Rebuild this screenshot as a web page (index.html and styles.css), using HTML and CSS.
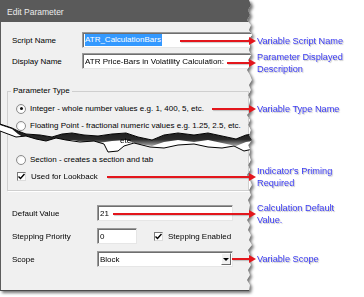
FILE: index.html
```html
<!DOCTYPE html>
<html lang="en">

<head>
  <meta charset="UTF-8">
  <meta name="viewport" content="width=device-width, initial-scale=1.0">
  <title>Edit Parameter</title>
  <link rel="stylesheet" href="styles.css">
</head>

<body>

  <div class="page">
    <div class="dialog-wrap">
      <div class="dialog">
        <div class="titlebar">Edit Parameter</div>
        <div class="body">
          <div class="row">
            <span class="label short">Script Name</span>
            <div class="field wide"><span class="sel">ATR_CalculationBars</span></div>
          </div>
          <div class="row">
            <span class="label short">Display Name</span>
            <div class="field wide">ATR Price-Bars in Volatility Calculation:</div>
          </div>

          <fieldset class="group">
            <legend>Parameter Type</legend>
            <div class="opt"><span class="radio on"></span>Integer - whole number values e.g. 1, 400, 5, etc.</div>
            <div class="opt"><span class="radio"></span>Floating Point - fractional numeric values e.g. 1.25, 2.5, etc.</div>
            <div class="opt after-tear"><span class="radio"></span>Section - creates a section and tab</div>
            <div class="opt">
              <span class="check"><svg width="7" height="7" viewBox="0 0 7 7"><polyline points="0.5,3.5 2.5,5.5 6.5,1" fill="none" stroke="#000" stroke-width="1.4"/></svg></span>Used for Lookback
            </div>
          </fieldset>

          <div class="row low">
            <span class="label">Default Value</span>
            <div class="field mid">21</div>
          </div>
          <div class="row">
            <span class="label">Stepping Priority</span>
            <div class="field small">0</div>
            <span class="check spaced"><svg width="7" height="7" viewBox="0 0 7 7"><polyline points="0.5,3.5 2.5,5.5 6.5,1" fill="none" stroke="#000" stroke-width="1.4"/></svg></span>Stepping Enabled
          </div>
          <div class="row">
            <span class="label">Scope</span>
            <div class="field mid combo">Block<span class="drop"></span></div>
          </div>
        </div>

        <!-- torn strip across the option list -->
        <svg class="tear" width="253" height="40" viewBox="0 0 253 40">
          <defs>
            <clipPath id="gap">
              <polygon points="0,6 6,8 12,10 18,13 26,16 40,17 52,19 62,16 72,15 84,17 98,18 112,16 126,15 138,19 152,22 164,17 178,15 194,17 208,15 222,18 236,21 246,17 253,16 253,31 244,33 234,28 222,30 208,29 194,26 178,27 164,30 150,29 134,25 124,28 118,33 108,34 104,26 94,23 80,24 66,22 56,20 46,23 36,21 26,18 16,19 8,16 0,13" />
            </clipPath>
            <linearGradient id="band" x1="0" y1="0" x2="0" y2="1">
              <stop offset="0" stop-color="#111" />
              <stop offset="0.7" stop-color="#2a2a2a" />
              <stop offset="1" stop-color="#aaa" />
            </linearGradient>
          </defs>
          <polygon fill="#fff" points="0,6 6,8 12,10 18,13 26,16 40,17 52,19 62,16 72,15 84,17 98,18 112,16 126,15 138,19 152,22 164,17 178,15 194,17 208,15 222,18 236,21 246,17 253,16 253,31 244,33 234,28 222,30 208,29 194,26 178,27 164,30 150,29 134,25 124,28 118,33 108,34 104,26 94,23 80,24 66,22 56,20 46,23 36,21 26,18 16,19 8,16 0,13" />
          <g clip-path="url(#gap)">
            <polygon fill="url(#band)" points="0,6 6,8 12,10 18,13 26,16 40,17 52,19 62,16 72,15 84,17 98,18 112,16 126,15 138,19 152,22 164,17 178,15 194,17 208,15 222,18 236,21 246,17 253,16 253,23 246,24 236,28 222,25 208,22 194,24 178,22 164,24 152,28 138,26 126,22 112,23 98,25 84,24 72,22 62,23 52,25 40,23 26,21 18,16 12,11 6,9 0,7" />
            <text x="120" y="25" class="scrap">ete.</text>
          </g>
          <polyline fill="none" stroke="#000" stroke-width="1" points="0,13 8,16 16,19 26,18 36,21 46,23 56,20 66,22 80,24 94,23 104,26 108,34 118,33 124,28 134,25 150,29 164,30 178,27 194,26 208,29 222,30 234,28 244,33 253,31" />
          <polyline fill="none" stroke="#000" stroke-width="1" points="0,6 6,8 12,10 18,13 26,16 40,17 52,19 62,16 72,15 84,17 98,18 112,16 126,15 138,19 152,22 164,17 178,15 194,17 208,15 222,18 236,21 246,17 253,16" />
        </svg>
      </div>
    </div>

    <div class="callout c-script"><span class="line"></span><span class="head"></span><span class="note">Variable Script Name</span></div>
    <div class="callout c-display"><span class="line"></span><span class="head"></span><span class="note">Parameter Displayed<br>Description</span></div>
    <div class="callout c-type"><span class="line"></span><span class="head"></span><span class="note">Variable Type Name</span></div>
    <div class="callout c-lookback"><span class="line"></span><span class="head"></span><span class="note">Indicator's Priming<br>Required</span></div>
    <div class="callout c-default"><span class="line"></span><span class="head"></span><span class="note">Calculation Default<br>Value.</span></div>
    <div class="callout c-scope"><span class="line"></span><span class="head"></span><span class="note">Variable Scope</span></div>
  </div>

</body>

</html>
```

FILE: styles.css
```css
body,
html {
  height: 100%;
  margin: 0;
  background-color: #fff;
  font-family: "Liberation Sans", Arial, sans-serif;
}

.page {
  position: relative;
  width: 364px;
  height: 297px;
}

.dialog-wrap {
  width: 253px;
  filter: drop-shadow(2px 2px 1.5px rgba(0, 0, 0, 0.55));
}

.dialog {
  position: relative;
  height: 291px;
  background-color: #f0f0f0;
  font-size: 8px;
  color: #000;
  clip-path: polygon(0 0, 249px 0, 251px 5px, 248px 10px, 250px 15px, 247px 20px, 251px 25px, 249px 30px, 252px 35px, 248px 40px, 250px 45px, 249px 50px, 251px 55px, 248px 60px, 250px 65px, 247px 70px, 250px 75px, 252px 80px, 249px 85px, 251px 90px, 248px 95px, 250px 100px, 249px 105px, 251px 110px, 247px 115px, 250px 120px, 248px 125px, 251px 130px, 249px 135px, 252px 140px, 248px 145px, 250px 150px, 249px 155px, 251px 160px, 248px 165px, 250px 170px, 247px 175px, 250px 180px, 252px 185px, 249px 190px, 251px 195px, 248px 200px, 250px 205px, 249px 210px, 251px 215px, 247px 220px, 250px 225px, 248px 230px, 251px 235px, 249px 240px, 252px 245px, 248px 250px, 250px 255px, 249px 260px, 251px 265px, 248px 270px, 250px 275px, 247px 280px, 250px 285px, 249px 291px, 0 291px);
}

.titlebar {
  height: 22px;
  line-height: 24px;
  padding-left: 7px;
  background-color: #5a5a5a;
  color: #ececec;
  font-size: 8.5px;
}

.body {
  height: 269px;
  box-sizing: border-box;
  padding-top: 10px;
  border-left: 1px solid #5c5c5c;
  border-bottom: 1px solid #4a4a4a;
}

.row {
  display: flex;
  align-items: center;
  height: 16px;
  padding-left: 11px;
  margin-bottom: 7px;
  white-space: nowrap;
}

.row:first-child {
  margin-bottom: 5px;
}

.label {
  width: 85px;
  flex: none;
}

.label.short {
  width: 70px;
}

.field {
  height: 16px;
  box-sizing: border-box;
  display: flex;
  align-items: center;
  padding-left: 2px;
  background-color: #fff;
  border: 1px solid;
  border-color: #9a9a9a #e6e6e6 #e6e6e6 #9a9a9a;
  box-shadow: inset 1px 1px 0 #6e6e6e;
  flex: none;
  position: relative;
  overflow: hidden;
}

.field.wide {
  width: 172px;
}

.field.mid {
  width: 136px;
}

.field.small {
  width: 40px;
}

.sel {
  background-color: #3399ff;
  color: #fff;
  line-height: 12px;
  padding-right: 1px;
}

.combo .drop {
  position: absolute;
  right: 1px;
  top: 1px;
  width: 10px;
  height: 12px;
  box-sizing: border-box;
  background-color: #f0f0f0;
  border: 1px solid;
  border-color: #fff #6a6a6a #6a6a6a #fff;
}

.combo .drop::after {
  content: "";
  position: absolute;
  left: 1px;
  top: 4px;
  border-left: 3px solid transparent;
  border-right: 3px solid transparent;
  border-top: 3px solid #000;
}

.group {
  width: 242px;
  box-sizing: border-box;
  margin: 17px 0 0 6px;
  padding: 4px 0 5px 3px;
  border: 1px solid #cfcfcf;
  box-shadow: 1px 1px 0 #fff;
}

.group legend {
  padding: 0 2px;
  line-height: 10px;
}

.opt {
  display: flex;
  align-items: center;
  height: 17px;
  padding-left: 5px;
  white-space: nowrap;
}

.opt.after-tear {
  margin-top: 17px;
}

.radio {
  width: 10px;
  height: 10px;
  box-sizing: border-box;
  border-radius: 50%;
  border: 1px solid #8c8c8c;
  background: radial-gradient(circle at 60% 60%, #fff 40%, #dcdcdc);
  margin-right: 4px;
  position: relative;
  flex: none;
}

.radio.on::after {
  content: "";
  position: absolute;
  left: 2.5px;
  top: 2.5px;
  width: 3px;
  height: 3px;
  border-radius: 50%;
  background-color: #111;
}

.check {
  width: 9px;
  height: 9px;
  box-sizing: border-box;
  border: 1px solid;
  border-color: #7a7a7a #dcdcdc #dcdcdc #7a7a7a;
  background-color: #fff;
  margin-left: 1px;
  margin-right: 5px;
  display: flex;
  align-items: center;
  justify-content: center;
  flex: none;
}

.check.spaced {
  margin-left: 17px;
}

.row.low {
  margin-top: 14px;
}

.tear {
  position: absolute;
  left: 0;
  top: 118px;
}

.scrap {
  font-size: 8px;
  font-family: "Liberation Sans", Arial, sans-serif;
}

/* callouts */

.callout {
  position: absolute;
  display: flex;
  align-items: center;
}

.callout .line {
  height: 2px;
  background-color: #e3161c;
  box-shadow: 1px 1px 1px rgba(0, 0, 0, 0.2);
}

.callout .head {
  width: 0;
  height: 0;
  border-left: 7px solid #e3161c;
  border-top: 4px solid transparent;
  border-bottom: 4px solid transparent;
}

.callout .note {
  margin-left: 1px;
  color: #3b3bf2;
  font-size: 9.2px;
  line-height: 12px;
  white-space: nowrap;
  text-shadow: 1px 1px 1px rgba(0, 0, 0, 0.25);
}

.c-script {
  top: 35px;
  left: 180px;
}

.c-script .line {
  width: 69px;
}

.c-display {
  top: 51px;
  left: 227px;
}

.c-display .line {
  width: 22px;
}

.c-type {
  top: 103px;
  left: 212px;
}

.c-type .line {
  width: 37px;
}

.c-lookback {
  top: 165px;
  left: 107px;
}

.c-lookback .line {
  width: 142px;
}

.c-default {
  top: 202px;
  left: 113px;
}

.c-default .line {
  width: 136px;
}

.c-scope {
  top: 253px;
  left: 232px;
}

.c-scope .line {
  width: 17px;
}
```
